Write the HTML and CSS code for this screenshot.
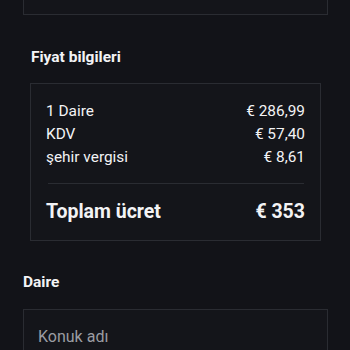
FILE: index.html
```html
<!DOCTYPE html>
<html lang="tr">
<head>
<meta charset="utf-8">
<link rel="stylesheet" href="styles.css">
</head>
<body>
<div class="page">
  <div class="top-card"></div>
  <section class="price">
    <h2 class="heading">Fiyat bilgileri</h2>
    <div class="price-card">
      <div class="row"><span>1 Daire</span><span>€ 286,99</span></div>
      <div class="row"><span>KDV</span><span>€ 57,40</span></div>
      <div class="row"><span>şehir vergisi</span><span>€ 8,61</span></div>
      <div class="divider"></div>
      <div class="row total"><span>Toplam ücret</span><span>€ 353</span></div>
    </div>
  </section>
  <h2 class="heading daire">Daire</h2>
  <div class="input">Konuk adı</div>
</div>
</body>
</html>
```
FILE: styles.css
```css
html, body {
  margin: 0;
  padding: 0;
  background: #121318;
  height: 100%;
  overflow: hidden;
}
body {
  font-family: Roboto, "Noto Sans", sans-serif;
  color: #f3f3f5;
}
.page {
  width: 305px;
  margin-left: 23px;
}
.top-card {
  height: 14px;
  border: 1px solid #2a2c32;
  border-top: none;
  background: #14151a;
}
.price {
  margin: 0 7px;
}
.heading {
  margin: 32px 0 16px 1px;
  font-size: 15.5px;
  line-height: 20px;
  font-weight: 700;
}
.price-card {
  border: 1px solid #2a2c32;
  background: #14151a;
  padding: 16px 15px 14px 15px;
}
.row {
  display: flex;
  justify-content: space-between;
  font-size: 15.4px;
  line-height: 23px;
}
.divider {
  height: 1px;
  background: #2a2c32;
  margin: 14px 1px 14px 2px;
}
.row.total {
  font-size: 19.5px;
  line-height: 28px;
  font-weight: 700;
}
.heading.daire {
  margin: 31px 0 17px 0;
}
.input {
  border: 1px solid #2a2c32;
  background: #14151a;
  padding: 16px 14px;
  height: 60px;
  font-size: 16px;
  line-height: 22px;
  color: #9b9ca2;
}
```
